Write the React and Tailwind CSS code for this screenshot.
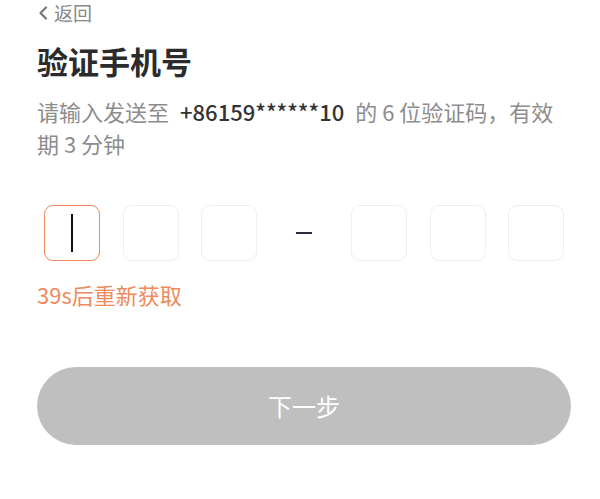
import React from "react";

const font = { fontFamily: '"Noto Sans CJK SC", "Noto Sans", sans-serif' };

function Box({ active }) {
  return (
    <div
      className={
        "w-[56px] h-[56px] rounded-[9px] flex items-center justify-center " +
        (active ? "border-[1.5px] border-[#ef8a5c]" : "border-[1.5px] border-[#efefef]")
      }
    >
      {active && <div className="w-[1.5px] h-[38px] bg-[#111]" />}
    </div>
  );
}

export default function App() {
  return (
    <div className="w-[600px] h-[499px] bg-white overflow-hidden" style={font}>
      <div className="ml-[37px] w-[534px]">
        <div className="h-[25px] flex items-center text-[19px] leading-[25px] text-[#888] gap-[6px]">
          <svg width="10" height="14" viewBox="0 0 10 14" className="ml-[1px]">
            <path d="M8 1.5 L2.5 7 L8 12.5" fill="none" stroke="#777" strokeWidth="2.2" strokeLinecap="round" strokeLinejoin="round" />
          </svg>
          <span>返回</span>
        </div>
        <h1 className="mt-[16px] text-[31px] leading-[40px] font-bold text-[#2b2b2b]">验证手机号</h1>
        <p className="mt-[14px] text-[22px] leading-[32px] text-[#8c8c8c] whitespace-nowrap">
          请输入发送至
          <span className="mx-[11px] text-[#333] font-medium">+86159******10</span>
          的 6 位验证码，有效
          <br />
          期 3 分钟
        </p>
        <div className="mt-[46px] px-[7px] flex items-center">
          <div className="flex gap-[22.5px]">
            <Box active />
            <Box />
            <Box />
          </div>
          <div className="flex-1 flex justify-center">
            <div className="w-[16px] h-[1.5px] bg-[#2c2c3c]" />
          </div>
          <div className="flex gap-[22.5px]">
            <Box />
            <Box />
            <Box />
          </div>
        </div>
        <div className="mt-[19px] text-[22px] leading-[28px] text-[#ef8a5c]">39s后重新获取</div>
        <button className="mt-[59px] w-[534px] h-[78px] rounded-full bg-[#bfbfbf] text-white text-[24px] flex items-center justify-center">
          下一步
        </button>
      </div>
    </div>
  );
}
